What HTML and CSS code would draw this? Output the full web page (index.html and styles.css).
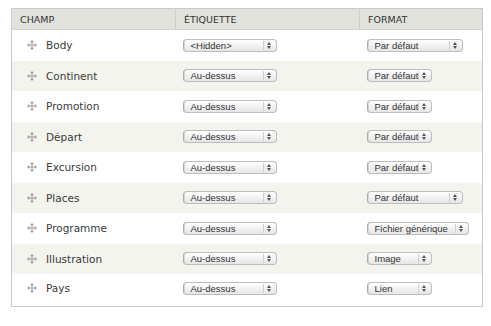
FILE: index.html
```html
<!doctype html>
<html lang="fr">
<head>
  <meta charset="utf-8">
  <title>Gérer l'affichage</title>
  <link rel="stylesheet" href="styles.css">
</head>
<body>

  <table class="fields">
    <thead>
      <tr>
        <th class="col-field">Champ</th>
        <th class="col-label">Étiquette</th>
        <th class="col-format">Format</th>
      </tr>
    </thead>
    <tbody>
      <tr>
        <td><span class="drag"><svg viewBox="0 0 10 10" width="10" height="10"><path d="M5 1.5v7M1.5 5h7" stroke="#9c9c9c" stroke-width="1"/><path d="M5 0L3 2.2h4zM5 10L3 7.8h4zM0 5L2.2 3v4zM10 5L7.8 3v4z" fill="#9c9c9c"/></svg></span>Body</td>
        <td><span class="select w-label">&lt;Hidden&gt;<span class="arrows"></span></span></td>
        <td><span class="select w-wide">Par défaut<span class="arrows"></span></span></td>
      </tr>
      <tr class="even">
        <td><span class="drag"><svg viewBox="0 0 10 10" width="10" height="10"><path d="M5 1.5v7M1.5 5h7" stroke="#9c9c9c" stroke-width="1"/><path d="M5 0L3 2.2h4zM5 10L3 7.8h4zM0 5L2.2 3v4zM10 5L7.8 3v4z" fill="#9c9c9c"/></svg></span>Continent</td>
        <td><span class="select w-label">Au-dessus<span class="arrows"></span></span></td>
        <td><span class="select w-short">Par défaut<span class="arrows"></span></span></td>
      </tr>
      <tr>
        <td><span class="drag"><svg viewBox="0 0 10 10" width="10" height="10"><path d="M5 1.5v7M1.5 5h7" stroke="#9c9c9c" stroke-width="1"/><path d="M5 0L3 2.2h4zM5 10L3 7.8h4zM0 5L2.2 3v4zM10 5L7.8 3v4z" fill="#9c9c9c"/></svg></span>Promotion</td>
        <td><span class="select w-label">Au-dessus<span class="arrows"></span></span></td>
        <td><span class="select w-short">Par défaut<span class="arrows"></span></span></td>
      </tr>
      <tr class="even">
        <td><span class="drag"><svg viewBox="0 0 10 10" width="10" height="10"><path d="M5 1.5v7M1.5 5h7" stroke="#9c9c9c" stroke-width="1"/><path d="M5 0L3 2.2h4zM5 10L3 7.8h4zM0 5L2.2 3v4zM10 5L7.8 3v4z" fill="#9c9c9c"/></svg></span>Départ</td>
        <td><span class="select w-label">Au-dessus<span class="arrows"></span></span></td>
        <td><span class="select w-short">Par défaut<span class="arrows"></span></span></td>
      </tr>
      <tr>
        <td><span class="drag"><svg viewBox="0 0 10 10" width="10" height="10"><path d="M5 1.5v7M1.5 5h7" stroke="#9c9c9c" stroke-width="1"/><path d="M5 0L3 2.2h4zM5 10L3 7.8h4zM0 5L2.2 3v4zM10 5L7.8 3v4z" fill="#9c9c9c"/></svg></span>Excursion</td>
        <td><span class="select w-label">Au-dessus<span class="arrows"></span></span></td>
        <td><span class="select w-short">Par défaut<span class="arrows"></span></span></td>
      </tr>
      <tr class="even">
        <td><span class="drag"><svg viewBox="0 0 10 10" width="10" height="10"><path d="M5 1.5v7M1.5 5h7" stroke="#9c9c9c" stroke-width="1"/><path d="M5 0L3 2.2h4zM5 10L3 7.8h4zM0 5L2.2 3v4zM10 5L7.8 3v4z" fill="#9c9c9c"/></svg></span>Places</td>
        <td><span class="select w-label">Au-dessus<span class="arrows"></span></span></td>
        <td><span class="select w-wide">Par défaut<span class="arrows"></span></span></td>
      </tr>
      <tr>
        <td><span class="drag"><svg viewBox="0 0 10 10" width="10" height="10"><path d="M5 1.5v7M1.5 5h7" stroke="#9c9c9c" stroke-width="1"/><path d="M5 0L3 2.2h4zM5 10L3 7.8h4zM0 5L2.2 3v4zM10 5L7.8 3v4z" fill="#9c9c9c"/></svg></span>Programme</td>
        <td><span class="select w-label">Au-dessus<span class="arrows"></span></span></td>
        <td><span class="select w-file">Fichier générique<span class="arrows"></span></span></td>
      </tr>
      <tr class="even">
        <td><span class="drag"><svg viewBox="0 0 10 10" width="10" height="10"><path d="M5 1.5v7M1.5 5h7" stroke="#9c9c9c" stroke-width="1"/><path d="M5 0L3 2.2h4zM5 10L3 7.8h4zM0 5L2.2 3v4zM10 5L7.8 3v4z" fill="#9c9c9c"/></svg></span>Illustration</td>
        <td><span class="select w-label">Au-dessus<span class="arrows"></span></span></td>
        <td><span class="select w-short">Image<span class="arrows"></span></span></td>
      </tr>
      <tr class="last">
        <td><span class="drag"><svg viewBox="0 0 10 10" width="10" height="10"><path d="M5 1.5v7M1.5 5h7" stroke="#9c9c9c" stroke-width="1"/><path d="M5 0L3 2.2h4zM5 10L3 7.8h4zM0 5L2.2 3v4zM10 5L7.8 3v4z" fill="#9c9c9c"/></svg></span>Pays</td>
        <td><span class="select w-label">Au-dessus<span class="arrows"></span></span></td>
        <td><span class="select w-short">Lien<span class="arrows"></span></span></td>
      </tr>
    </tbody>
  </table>

</body>
</html>
```

FILE: styles.css
```css
body {
  margin: 0;
  padding: 8px 0 0 11px;
  background: #fff;
  font-family: "DejaVu Sans", Verdana, sans-serif;
  font-size: 10px;
  color: #333;
}
.fields {
  width: 472px;
  border-collapse: collapse;
  border: 1px solid #c8c8c8;
}
.fields th {
  height: 20px;
  padding: 0 0 0 8px;
  text-align: left;
  font-weight: normal;
  font-size: 9.5px;
  text-transform: uppercase;
  color: #333;
  background: #e1e2dc;
  border-bottom: 1px solid #d3d3cd;
  border-left: 1px solid #cfd0ca;
}
.col-field { width: 155px; }
.col-label { width: 175px; }
.fields td {
  height: 30.5px;
  padding: 0 0 0 7px;
  vertical-align: middle;
  white-space: nowrap;
}
.fields td:first-child {
  padding-left: 15px;
  font-size: 10.5px;
  color: #3a3a3a;
}
.fields tr.even td {
  background: #f3f4ee;
}
.fields tr.last td {
  height: 28px;
  padding-bottom: 4px;
}
.drag {
  display: inline-block;
  width: 10px;
  height: 10px;
  margin-right: 9px;
  vertical-align: -1px;
}
.drag svg {
  display: block;
}
.select {
  position: relative;
  display: inline-block;
  box-sizing: border-box;
  height: 13px;
  padding: 0 16px 0 7px;
  line-height: 12px;
  font-family: "Liberation Sans", Arial, sans-serif;
  font-size: 9.5px;
  color: #333;
  border: 1px solid #bdbdbd;
  border-left-color: #a9a9a9;
  border-radius: 4px;
  background: linear-gradient(#ffffff, #f2f2f2 50%, #e6e6e6);
  box-shadow: inset 1px 0 0 #d6d6d6;
  vertical-align: middle;
}
.arrows {
  position: absolute;
  top: 1px;
  right: 0;
  bottom: 1px;
  width: 12px;
  border-left: 1px solid #d0d0d0;
}
.arrows::before,
.arrows::after {
  content: "";
  position: absolute;
  left: 3px;
  border-left: 2px solid transparent;
  border-right: 2px solid transparent;
}
.arrows::before {
  top: 1px;
  border-bottom: 3px solid #555;
}
.arrows::after {
  bottom: 1px;
  border-top: 3px solid #555;
}
.w-label { width: 94px; }
.w-wide { width: 96px; }
.w-short { width: 65px; }
.w-file { width: 102px; }
```
